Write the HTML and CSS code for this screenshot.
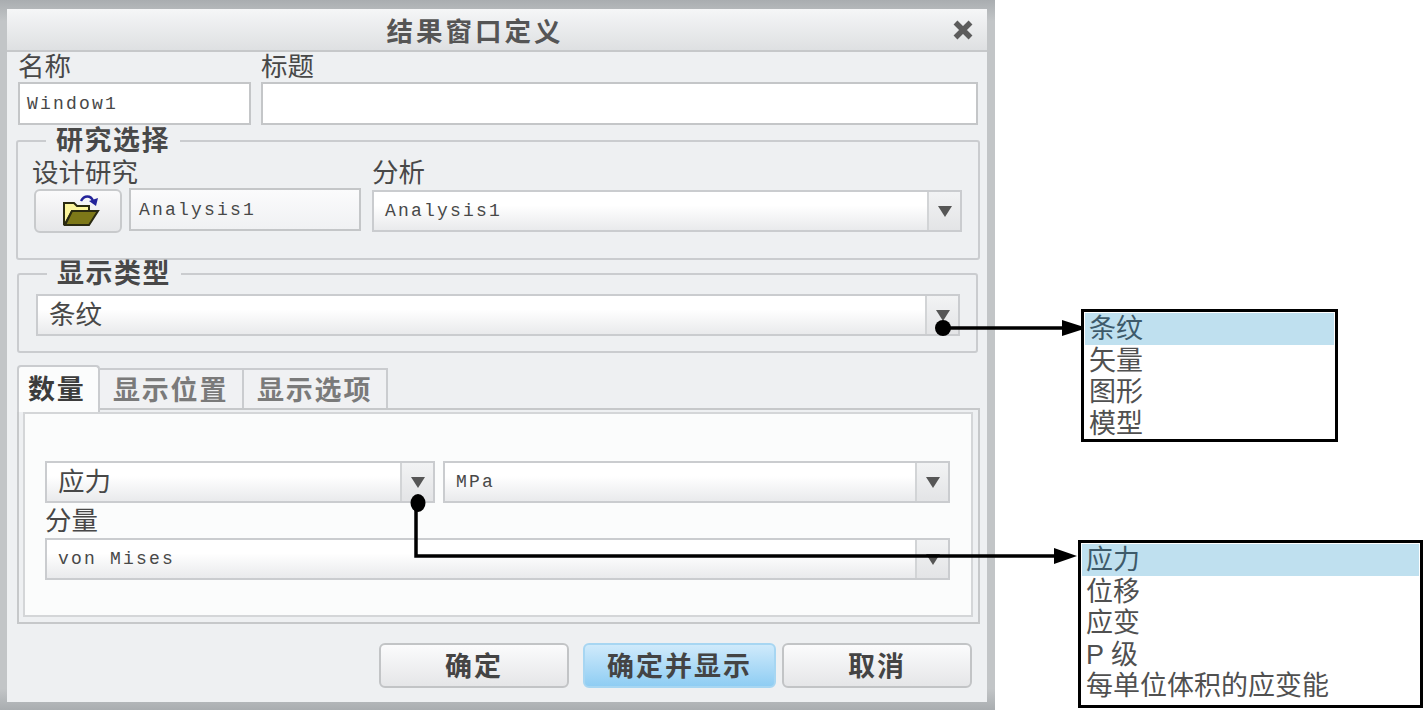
FILE: index.html
```html
<!DOCTYPE html>
<html lang="zh-CN">
<head>
    <meta charset="UTF-8">
    <title>结果窗口定义</title>
    <link rel="stylesheet" href="styles.css">
</head>
<body>
    <div class="page">
        <div class="dialog">
            <div class="dialog-inner">
                <div class="title-bar">
                    <span class="title-text">结果窗口定义</span>
                    <svg class="close-icon" width="20" height="20" viewBox="0 0 20 20">
                        <path d="M2.5 2.5 L17.5 17.5 M17.5 2.5 L2.5 17.5" stroke="#5c5c5c" stroke-width="5.5"/>
                    </svg>
                </div>

                <div class="dialog-body">
                    <div class="name-row">
                        <div class="name-col">
                            <div class="label">名称</div>
                            <div class="input mono">Window1</div>
                        </div>
                        <div class="title-col">
                            <div class="label">标题</div>
                            <div class="input"></div>
                        </div>
                    </div>

                    <div class="group group-study">
                        <div class="group-title">研究选择</div>
                        <div class="study-row">
                            <div class="study-col">
                                <div class="label study-label">设计研究</div>
                                <div class="study-controls">
                                    <button class="icon-btn">
                                        <svg width="38" height="32" viewBox="0 0 38 32">
                                            <path d="M19 6 C22 0 29 0 31 6" fill="none" stroke="#23239a" stroke-width="2.4"/>
                                            <path d="M27 6 L36 3 L34 11 Z" fill="#23239a"/>
                                            <path d="M2 29 V8 H12 L15 11 H27 V16 H10 L3 29 Z" fill="#fbf59c" stroke="#2a2a10" stroke-width="2"/>
                                            <path d="M3 30 L10 16 H36 L27 30 Z" fill="#7d7818" stroke="#2a2a10" stroke-width="2"/>
                                        </svg>
                                    </button>
                                    <div class="input input-readonly mono">Analysis1</div>
                                </div>
                            </div>
                            <div class="analysis-col">
                                <div class="label">分析</div>
                                <div class="dropdown mono">
                                    <span class="dropdown-text">Analysis1</span>
                                    <span class="dropdown-arrow"></span>
                                </div>
                            </div>
                        </div>
                    </div>

                    <div class="group group-type">
                        <div class="group-title">显示类型</div>
                        <div class="dropdown">
                            <span class="dropdown-text">条纹</span>
                            <span class="dropdown-arrow"></span>
                        </div>
                    </div>

                    <div class="tabs">
                        <div class="tab active">数量</div>
                        <div class="tab">显示位置</div>
                        <div class="tab">显示选项</div>
                    </div>
                    <div class="panel">
                        <div class="panel-inner">
                            <div class="quantity-row">
                                <div class="dropdown quantity-type">
                                    <span class="dropdown-text">应力</span>
                                    <span class="dropdown-arrow"></span>
                                </div>
                                <div class="dropdown quantity-unit mono">
                                    <span class="dropdown-text">MPa</span>
                                    <span class="dropdown-arrow"></span>
                                </div>
                            </div>
                            <div class="label">分量</div>
                            <div class="dropdown mono">
                                <span class="dropdown-text">von Mises</span>
                                <span class="dropdown-arrow"></span>
                            </div>
                        </div>
                    </div>

                    <div class="actions">
                        <button class="btn">确定</button>
                        <button class="btn btn-primary">确定并显示</button>
                        <button class="btn">取消</button>
                    </div>
                </div>
            </div>
        </div>

        <!-- callouts -->
        <svg class="callout-lines" width="1425" height="725" viewBox="0 0 1425 725">
            <circle cx="943" cy="328" r="8" fill="#000"/>
            <path d="M943 328 H1066" stroke="#000" stroke-width="3.5" fill="none"/>
            <path d="M1062 320 L1087 328 L1062 336 Z" fill="#000"/>
            <ellipse cx="418" cy="503" rx="7.5" ry="9" fill="#000"/>
            <path d="M416 503 V556 H1058" stroke="#000" stroke-width="3.5" fill="none"/>
            <path d="M1054 548 L1077 556 L1054 564 Z" fill="#000"/>
        </svg>

        <ul class="popup popup-type">
            <li class="selected">条纹</li>
            <li>矢量</li>
            <li>图形</li>
            <li>模型</li>
        </ul>
        <ul class="popup popup-quantity">
            <li class="selected">应力</li>
            <li>位移</li>
            <li>应变</li>
            <li>P 级</li>
            <li>每单位体积的应变能</li>
        </ul>
    </div>
</body>
</html>
```

FILE: styles.css
```css
* {
    margin: 0;
    padding: 0;
    box-sizing: border-box;
}

body {
    background: white;
    font-family: "Liberation Sans", "Noto Sans CJK SC", sans-serif;
    font-size: 26.5px;
    color: #484848;
}

.page {
    position: relative;
    width: 1425px;
    height: 725px;
    overflow: hidden;
}

.dialog {
    width: 995px;
    height: 710px;
    padding: 9px 8px 8px 7px;
    background: linear-gradient(180deg, #a9adb0 0%, #c2c5c7 3%, #c2c5c7 97%, #a9adb0 100%);
}

.dialog-inner {
    height: 100%;
    background: #eef0f2;
}

.title-bar {
    display: flex;
    align-items: center;
    height: 43px;
    padding-right: 14px;
    background: linear-gradient(180deg, #f5f6f7 0%, #dee0e2 100%);
    border-bottom: 2px solid #c6c8ca;
}

.title-text {
    flex: 1;
    padding-right: 10px;
    text-align: center;
    font-size: 26.5px;
    font-weight: bold;
    letter-spacing: 3px;
    color: #555;
}

.dialog-body {
    padding: 0 9px 0 11px;
}

.label {
    height: 30px;
    line-height: 30px;
}

.study-label {
    margin-left: -2px;
}

.mono {
    font-family: "Liberation Mono", monospace;
    font-size: 18px;
    letter-spacing: 2.2px;
}

.name-row {
    display: flex;
    gap: 10px;
}

.name-col {
    width: 233px;
}

.title-col {
    flex: 1;
}

.input {
    display: flex;
    align-items: center;
    height: 43px;
    padding-left: 7px;
    background: white;
    border: 2px solid #c4c6c8;
}

.input-readonly {
    flex: 1;
    padding-left: 8px;
    background: linear-gradient(180deg, #fbfbfc 0%, #f0f1f3 100%);
}

/* group boxes */
.group {
    border: 2px solid #cacccf;
    border-radius: 3px;
}

.group-study {
    height: 120px;
    margin: 15px -2px 0 -2px;
    padding: 0 16px;
}

.group-type {
    height: 80px;
    margin: 13px 0 0 -1px;
    padding: 0 16px 0 17px;
}

.group-title {
    width: max-content;
    margin: -14px 0 0 12px;
    padding: 0 10px;
    height: 26px;
    line-height: 26px;
    font-size: 27px;
    font-weight: bold;
    letter-spacing: 1.5px;
    background: #eef0f2;
}

.group-type .group-title {
    margin: -14px 0 7px 11px;
}

.study-row {
    display: flex;
    gap: 11px;
    margin-top: 4px;
}

.study-col {
    width: 327px;
}

.study-controls {
    display: flex;
    gap: 7px;
}

.analysis-col {
    flex: 1;
}

.icon-btn {
    display: flex;
    align-items: center;
    justify-content: center;
    width: 88px;
    height: 44px;
    margin-top: 1px;
    padding-left: 6px;
    background: linear-gradient(180deg, #fafafb 0%, #e6e7e9 100%);
    border: 2px solid #c8cacc;
    border-radius: 6px;
}

/* dropdowns */
.dropdown {
    display: flex;
    align-items: stretch;
    height: 42px;
    background: linear-gradient(180deg, #ffffff 0%, #ffffff 35%, #e9eaec 100%);
    border: 2px solid #cacccf;
}

.analysis-col .dropdown {
    margin-top: 2px;
}

.dropdown-text {
    flex: 1;
    display: flex;
    align-items: center;
    padding: 0 0 6px 11px;
}

.mono .dropdown-text {
    padding-bottom: 0;
}

.dropdown-arrow {
    display: flex;
    align-items: center;
    justify-content: center;
    width: 33px;
    background: linear-gradient(180deg, #f2f3f4 0%, #e3e4e6 100%);
    border-left: 2px solid #d2d4d6;
}

.dropdown-arrow::after {
    content: "";
    border-top: 11px solid #565656;
    border-left: 7px solid transparent;
    border-right: 7px solid transparent;
}

/* tabs */
.tabs {
    display: flex;
    align-items: flex-end;
    margin: 12px 0 0 -1px;
}

.tab {
    position: relative;
    width: 144px;
    height: 40px;
    padding-left: 13px;
    line-height: 42px;
    font-size: 27px;
    font-weight: bold;
    letter-spacing: 1.8px;
    color: #7a7a7a;
    background: #f0f1f3;
    border-top: 2px solid #cacccf;
    border-right: 2px solid #cacccf;
}

.tab.active {
    z-index: 1;
    width: 83px;
    height: 47px;
    margin-bottom: -4px;
    padding: 0 0 0 9px;
    line-height: 46px;
    color: #3c3c3c;
    background: #fbfcfc;
    border: 2px solid #cacccf;
    border-bottom: none;
    border-radius: 4px 4px 0 0;
}

.panel {
    height: 216px;
    margin: 0 -2px 0 -1px;
    padding: 2px 5px 5px 4px;
    border: 2px solid #c6c8ca;
}

.panel-inner {
    height: 100%;
    padding: 47px 21px 0 20px;
    background: #fbfcfc;
    border: 2px solid #d4d6d8;
}

.quantity-row {
    display: flex;
    gap: 8px;
}

.quantity-type {
    width: 390px;
}

.quantity-unit {
    flex: 1;
}

.panel-inner .label {
    height: 35px;
    line-height: 36px;
}

/* bottom buttons */
.actions {
    display: flex;
    justify-content: flex-end;
    margin-top: 19px;
    padding-right: 6px;
}

.btn {
    width: 190px;
    height: 45px;
    padding-bottom: 4px;
    font-family: inherit;
    font-size: 27px;
    font-weight: bold;
    letter-spacing: 2px;
    color: #444;
    background: linear-gradient(180deg, #fbfbfc 0%, #e5e6e8 100%);
    border: 2px solid #c2c4c6;
    border-radius: 6px;
}

.btn-primary {
    width: 193px;
    margin: 0 6px 0 14px;
    background: linear-gradient(180deg, #cfeafb 0%, #8fcdf3 100%);
    border-color: #a7d6f2;
}

/* callout overlays */
.callout-lines {
    position: absolute;
    top: 0;
    left: 0;
    pointer-events: none;
}

.popup {
    position: absolute;
    list-style: none;
    padding: 1px;
    font-size: 27px;
    background: white;
    border: 3px solid #000;
    color: #505050;
}

.popup li {
    height: 31.5px;
    padding-left: 4px;
    line-height: 33px;
}

.popup li.selected {
    color: #3d5a6a;
    background: #bfe0ef;
}

.popup-type {
    top: 309px;
    left: 1081px;
    width: 257px;
    height: 133px;
}

.popup-quantity {
    top: 540px;
    left: 1078px;
    width: 345px;
    height: 168px;
}
```
